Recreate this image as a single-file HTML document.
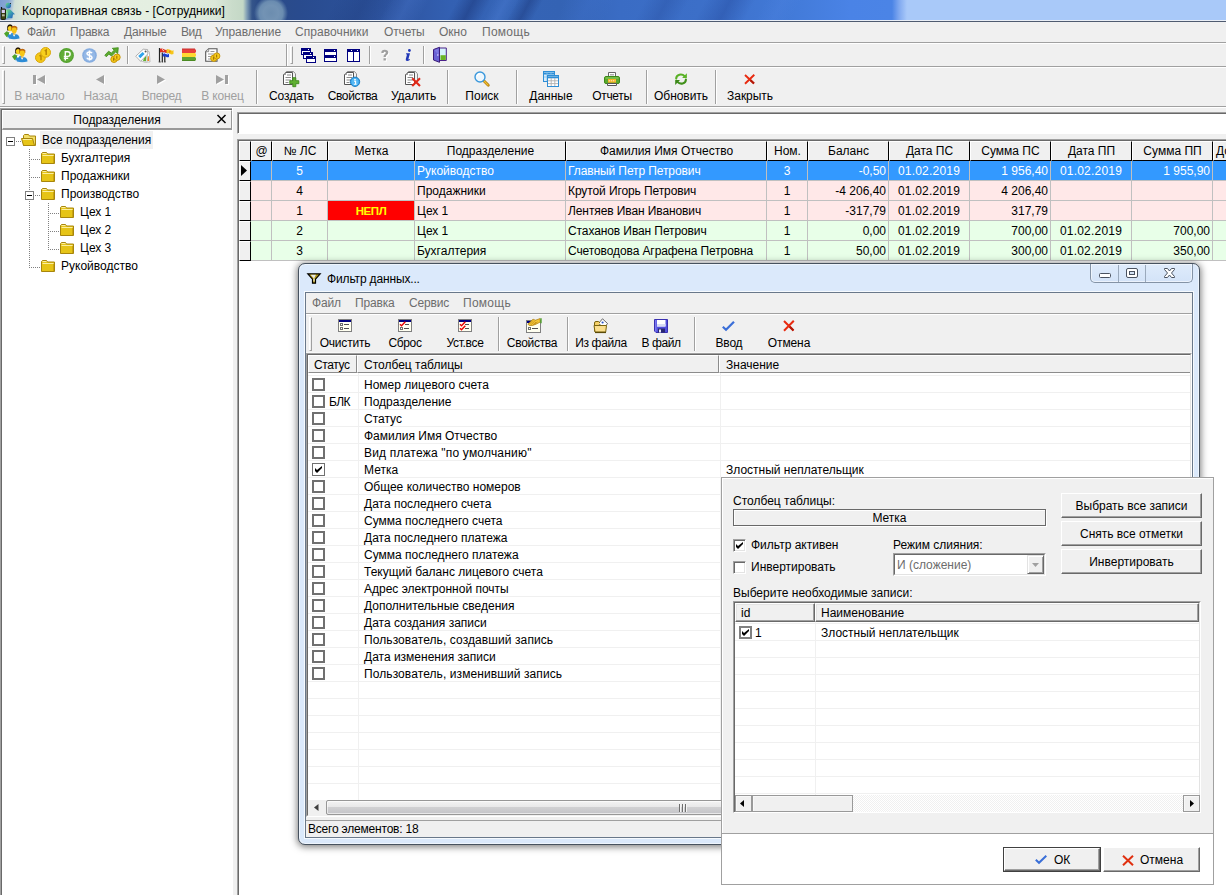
<!DOCTYPE html>
<html lang="ru">
<head>
<meta charset="utf-8">
<title>Корпоративная связь - [Сотрудники]</title>
<style>
*{box-sizing:border-box;margin:0;padding:0}
html,body{width:1226px;height:895px;overflow:hidden;background:#fff}
body{font-family:"Liberation Sans",sans-serif;font-size:12px;color:#000;position:relative}
.a{position:absolute}
.t{position:absolute;white-space:pre;line-height:14px;height:14px}
.g{color:#6d6d6d}
.hl{position:absolute;height:1px;left:0;right:0}
svg{position:absolute;overflow:visible}
#title{left:0;top:0;width:1226px;height:20px;background:
 radial-gradient(circle 17px at 271px 13px,#6c8daf 0,#7393b4 45%,#6a8cb0 70%,rgba(90,125,165,0) 100%),
 linear-gradient(100deg,#7d9dd0 0,#8aa8d6 9px,rgba(150,180,215,0) 15px),
 linear-gradient(90deg,#a6bce0 0,#cfdfd6 14px,#dde9d9 24px,#e6f0e3 60px,#e4efe1 150px,#dbe8d9 215px,#cadccb 232px,#c4d8c6 243px,#7f9cb4 247px,#35558a 252px,#2b4b86 258px,#294b8e 300px,#2b5098 350px,#2e55a2 400px,#3360b2 450px,#3564b6 500px,#3463b4 560px,#3a6cc4 620px,#3c6fc8 700px,#427ad8 790px,#4a83e6 850px,#4b84e6 892px,#7fa8f0 899px,#a9c9f9 907px,#a9c9f9 1226px)}
.grip{position:absolute;width:3px;border-top:1px solid #fff;border-left:1px solid #fff;border-right:1px solid #a0a0a0;border-bottom:1px solid #a0a0a0}
.vsep{position:absolute;width:2px;border-left:1px solid #a0a0a0;border-right:1px solid #fff}
.bl{position:absolute;width:80px;text-align:center;white-space:pre;line-height:14px;height:14px}
.dis{color:#a0a0a0}
.tr{position:absolute;white-space:pre;line-height:18px;height:18px}
.dv{position:absolute;width:1px;background:repeating-linear-gradient(180deg,#808080 0,#808080 1px,transparent 1px,transparent 2px)}
.dh{position:absolute;height:1px;background:repeating-linear-gradient(90deg,#808080 0,#808080 1px,transparent 1px,transparent 2px)}
.pm{position:absolute;width:9px;height:9px;border:1px solid #808080;background:#fff}
.pm:after{content:"";position:absolute;left:1px;top:3px;width:5px;height:1px;background:#000}
.hc{position:absolute;top:141px;height:20px;background:#f0f0f0;border-top:1px solid #fff;border-left:1px solid #fff;border-right:1px solid #000;border-bottom:1px solid #000;text-align:center;line-height:18px;white-space:pre;overflow:hidden}
.ic{position:absolute;left:239px;width:12px;height:20px;background:#f0f0f0;border-top:1px solid #fff;border-left:1px solid #fff;border-right:1px solid #000;border-bottom:1px solid #000}
.row{position:absolute;left:251px;width:975px;height:20px;border-bottom:1px solid #c0c0c0}
.c{position:absolute;top:0;height:19px;line-height:21px;white-space:pre;border-right:1px solid #c0c0c0;overflow:hidden}
.c.l{padding-left:2px;text-align:left}
.c.r{padding-right:2px;text-align:right}
.c.m{text-align:center}
.sel{background:#3399ff;color:#fff}
.pk{background:#ffe8e8}
.gr{background:#e8ffe8}
.lh{position:absolute;top:355px;height:18px;background:#f0f0f0;border-top:1px solid #fff;border-left:1px solid #fff;border-right:1px solid #8c8c8c;border-bottom:1px solid #8c8c8c;padding-left:5px;line-height:19px;white-space:pre;overflow:hidden}
.ch{position:absolute;top:603px;height:19px;background:#f0f0f0;border-top:1px solid #fff;border-left:1px solid #fff;border-right:1px solid #696969;border-bottom:1px solid #696969;box-shadow:inset -1px -1px 0 #a0a0a0,inset 1px 1px 0 #e3e3e3;padding-left:5px;line-height:19px;white-space:pre;overflow:hidden}
.cb{position:absolute;width:13px;height:13px;border:2px solid #707070;background:#fff}
.cb.ck{border:1px solid #707070}
.cc{position:absolute;width:13px;height:13px;background:#fff;border-top:1px solid #a0a0a0;border-left:1px solid #a0a0a0;border-right:1px solid #fff;border-bottom:1px solid #fff;box-shadow:inset 1px 1px 0 #696969,inset -1px -1px 0 #e3e3e3}
.cf{position:absolute;width:13px;height:13px;background:#fff;border:2px solid #808080}
.btn{position:absolute;background:#f0f0f0;border-top:1px solid #fff;border-left:1px solid #fff;border-right:1px solid #696969;border-bottom:1px solid #696969;box-shadow:inset -1px -1px 0 #a0a0a0;text-align:center;white-space:pre}
.sbb{position:absolute;background:#f0f0f0;border:1px solid #999;box-shadow:inset 1px 1px 0 #f8f8f8}
.dith{background:conic-gradient(#fff 25%,#f0f0f0 0 50%,#fff 0 75%,#f0f0f0 0) 0 0/2px 2px}
</style>
</head>
<body>
<!-- ===== main title bar ===== -->
<div id="title" class="a" style="overflow:hidden"><div class="a" style="left:330px;top:-4px;width:60px;height:28px;transform:skewX(-28deg);background:linear-gradient(90deg,rgba(20,40,95,0),rgba(20,40,95,0.18) 50%,rgba(20,40,95,0))"></div><div class="a" style="left:452px;top:-4px;width:34px;height:28px;transform:skewX(-28deg);background:linear-gradient(90deg,rgba(18,38,100,0),rgba(18,38,100,0.38) 50%,rgba(18,38,100,0))"></div><div class="a" style="left:512px;top:-4px;width:26px;height:28px;transform:skewX(-28deg);background:linear-gradient(90deg,rgba(18,38,100,0),rgba(18,38,100,0.34) 50%,rgba(18,38,100,0))"></div><div class="a" style="left:384px;top:-4px;width:40px;height:28px;transform:skewX(-28deg);background:linear-gradient(90deg,rgba(90,140,230,0),rgba(90,140,230,0.22) 50%,rgba(90,140,230,0))"></div><div class="a" style="left:488px;top:-4px;width:26px;height:28px;transform:skewX(-28deg);background:linear-gradient(90deg,rgba(90,140,230,0),rgba(90,140,230,0.25) 50%,rgba(90,140,230,0))"></div><div class="a" style="left:560px;top:-4px;width:50px;height:28px;transform:skewX(-28deg);background:linear-gradient(90deg,rgba(70,120,215,0),rgba(70,120,215,0.18) 50%,rgba(70,120,215,0))"></div><div class="a" style="left:640px;top:-4px;width:44px;height:28px;transform:skewX(-28deg);background:linear-gradient(90deg,rgba(25,55,130,0),rgba(25,55,130,0.22) 50%,rgba(25,55,130,0))"></div><div class="a" style="left:700px;top:-4px;width:50px;height:28px;transform:skewX(-28deg);background:linear-gradient(90deg,rgba(25,55,135,0),rgba(25,55,135,0.3) 50%,rgba(25,55,135,0))"></div><div class="a" style="left:760px;top:-4px;width:36px;height:28px;transform:skewX(-28deg);background:linear-gradient(90deg,rgba(90,140,235,0),rgba(90,140,235,0.15) 50%,rgba(90,140,235,0))"></div></div>
<div class="hl" style="top:20px;background:#e9eef6"></div>
<div class="hl" style="top:21px;background:#4f5b70"></div>
<div class="t" style="left:22px;top:4px;letter-spacing:.05px">Корпоративная связь - [Сотрудники]</div>
<svg style="left:0px;top:2px" width="17" height="18" viewBox="0 0 17 18"><defs><linearGradient id="ag" x1="0" y1="0" x2="1" y2="1"><stop offset="0" stop-color="#7be070"/><stop offset=".45" stop-color="#3aa0b0"/><stop offset="1" stop-color="#1c4fc0"/></linearGradient></defs><path d="M1.500 5v2.500" stroke="#111" stroke-width="1.200"/><rect x="1" y="7" width="4.500" height="10.500" rx=".8" fill="#3c4212" stroke="#161606" stroke-width=".9"/><rect x="1.700" y="7.800" width="3.200" height="3.200" fill="#d6ccf2"/><rect x="2" y="12.300" width="2.700" height="2" fill="#b8b8a0"/><circle cx="8.300" cy="3.500" r="2.700" fill="url(#ag)"/><path d="M10.200 1.300 11 1.800" stroke="#111" stroke-width="1"/><path d="M6.200 8Q8.500 6.300 10.800 8L13.200 10.500 15 12.200 13 12.600 12.300 16.200H6.200z" fill="url(#ag)"/><path d="M6.600 8.500Q7.800 12 6.600 16" stroke="#9fe89a" stroke-width="1" fill="none"/></svg>
<!-- ===== menu bar ===== -->
<div class="a" style="left:0;top:22px;width:1226px;height:86px;background:#f0f0f0"></div>
<div class="t g" style="left:27px;top:25px;letter-spacing:-0.3px">Файл</div>
<div class="t g" style="left:70px;top:25px;letter-spacing:-0.2px">Правка</div>
<div class="t g" style="left:124px;top:25px;letter-spacing:-0.15px">Данные</div>
<div class="t g" style="left:181px;top:25px;letter-spacing:-0.5px">Вид</div>
<div class="t g" style="left:215px;top:25px;letter-spacing:-0.07px">Управление</div>
<div class="t g" style="left:295px;top:25px;letter-spacing:0.07px">Справочники</div>
<div class="t g" style="left:384px;top:25px;letter-spacing:-0.15px">Отчеты</div>
<div class="t g" style="left:439px;top:25px;letter-spacing:0px">Окно</div>
<div class="t g" style="left:482px;top:25px;letter-spacing:0.27px">Помощь</div>
<div class="hl" style="top:42px;background:#a0a0a0"></div>
<div class="hl" style="top:43px;background:#fff"></div>
<!-- ===== icon toolbar ===== -->
<div class="grip" style="left:2px;top:46px;height:18px"></div>
<div class="vsep" style="left:127px;top:46px;height:18px"></div>
<div class="vsep" style="left:286px;top:44px;height:22px"></div>
<div class="grip" style="left:290px;top:46px;height:18px"></div>
<div class="vsep" style="left:369px;top:46px;height:18px"></div>
<div class="vsep" style="left:423px;top:46px;height:18px"></div>
<div class="hl" style="top:66px;background:#a0a0a0"></div>
<div class="hl" style="top:67px;background:#fff"></div>
<svg style="left:4px;top:24px" width="16" height="16" viewBox="0 0 16 16"><path d="M0 9.5 3 7l1 1.2 1.5-.2v4L2.5 13z" fill="#4ea32a"/><path d="M3.5 13.5c0-3 1.5-4.5 4-4.5s4 1.500 4 4.500z" fill="#2f8fd8"/><path d="M3.200 6.500V2.800Q3.500.3 6 .3T8.800 2.800V6.500z" fill="#2a1a08"/><ellipse cx="6" cy="4.6" rx="2.100" ry="2.700" fill="#f7cf1d"/><path d="M5 8.500h2.200v2H5z" fill="#fff"/><path d="M4.800 14.600c0-3.200 1.800-4.600 5.200-4.600s5.500 1.400 5.500 4.600Q10 16 4.800 14.600z" fill="#2d8cd6"/><path d="M8.600 10.200h3l-1.500 2.600z" fill="#fff"/><path d="M7.200 6V3.600Q7.600 1.700 10.200 1.700T13.300 3.600V6z" fill="#b8620e"/><ellipse cx="10.200" cy="6.200" rx="2.600" ry="3.100" fill="#f6c619"/><path d="M7.600 4.600Q10.200 2.600 12.900 4.600L12.900 3.500Q10.200 1.500 7.600 3.500z" fill="#c9720f"/><path d="M9 9.200q1.200.8 2.400 0v1.300H9z" fill="#e0a010"/></svg>
<svg style="left:12px;top:47px" width="16" height="16" viewBox="0 0 16 16"><path d="M0 9.5 3 7l1 1.2 1.5-.2v4L2.5 13z" fill="#4ea32a"/><path d="M3.5 13.5c0-3 1.5-4.5 4-4.5s4 1.500 4 4.500z" fill="#2f8fd8"/><path d="M3.200 6.500V2.800Q3.500.3 6 .3T8.800 2.800V6.500z" fill="#2a1a08"/><ellipse cx="6" cy="4.6" rx="2.100" ry="2.700" fill="#f7cf1d"/><path d="M5 8.500h2.200v2H5z" fill="#fff"/><path d="M4.800 14.600c0-3.200 1.800-4.600 5.200-4.600s5.500 1.400 5.500 4.600Q10 16 4.800 14.600z" fill="#2d8cd6"/><path d="M8.600 10.200h3l-1.500 2.600z" fill="#fff"/><path d="M7.200 6V3.600Q7.600 1.700 10.200 1.700T13.300 3.600V6z" fill="#b8620e"/><ellipse cx="10.200" cy="6.200" rx="2.600" ry="3.100" fill="#f6c619"/><path d="M7.600 4.600Q10.200 2.600 12.900 4.600L12.900 3.500Q10.200 1.500 7.600 3.500z" fill="#c9720f"/><path d="M9 9.200q1.200.8 2.400 0v1.300H9z" fill="#e0a010"/></svg>
<svg style="left:35px;top:47px" width="16" height="16" viewBox="0 0 16 16"><circle cx="5.400" cy="10.600" r="4.900" fill="#f4c816" stroke="#d9a60a"/><path d="M4.500 9.200 6 8.200v5" stroke="#b88606" stroke-width="1.500" fill="none"/><circle cx="10.600" cy="5.400" r="4.900" fill="#f7cf1c" stroke="#d9a60a"/><path d="M9.700 4 11.200 3v5" stroke="#b88606" stroke-width="1.500" fill="none"/></svg>
<svg style="left:59px;top:48px" width="15" height="15" viewBox="0 0 15 15"><circle cx="7.500" cy="7.500" r="7.400" fill="#54a230"/><circle cx="7.500" cy="7.500" r="6.200" fill="#62ad38"/><path d="M6.300 12.500V3.700h2.500a2.300 2.300 0 0 1 0 4.700H4.800M4.800 10.300h4.400" stroke="#fff" stroke-width="1.400" fill="none"/></svg>
<svg style="left:81.5px;top:47.5px" width="15" height="15" viewBox="0 0 15 15"><circle cx="7.500" cy="7.500" r="7.300" fill="#86ade0"/><circle cx="7.500" cy="7.500" r="5.800" fill="#94b8e6"/><path d="M10 5.200Q9.300 3.900 7.500 3.900C5.600 3.900 5 4.900 5 5.700c0 2.500 5 1.200 5 3.700 0 .9-.8 1.800-2.500 1.800Q5.500 11.200 4.900 9.800M7.500 2.500v10" stroke="#fff" stroke-width="1.500" fill="none"/></svg>
<svg style="left:104px;top:47px" width="17" height="16" viewBox="0 0 17 16"><path d="M.8 8.200 4.600 4.200 7.300 6 10.200 3.200 8.300 1.300 14.300.7 13.700 6.700 11.800 4.800 7.600 9 4.900 7.200 2.300 9.800z" fill="#5cab2e" stroke="#3f8a1c" stroke-width=".8"/><circle cx="10" cy="12.300" r="3.200" fill="#f6cc1a" stroke="#c9960a"/><circle cx="13" cy="10.200" r="3.200" fill="#f6cc1a" stroke="#c9960a"/><path d="M9.600 10.800v3M12.800 8.700v3" stroke="#a87806" stroke-width="1.200"/></svg>
<svg style="left:135px;top:48px" width="16" height="15" viewBox="0 0 16 15"><path d="M9.500 2.300 14.300 3.800 15 14H8.500z" fill="#fff" stroke="#b0b0b0" stroke-width=".8"/><path d="M12.500 8.500 13.800 8 14.200 13h-2.600z" fill="#f5831e"/><path d="M7.500 1.800 12.700 2.500 12 14.200 5.500 13z" fill="#fff" stroke="#b8b8b8" stroke-width=".8"/><path d="M9.800 8.800 11.500 7.500 11 13.200 7.800 12.800z" fill="#62b032"/><path d="M.7 8.200 8.300 1.200 12.600 1.500 12.800 5.900 5.600 13.300z" fill="#fff" stroke="#a8a8a8" stroke-width=".9"/><path d="M3.200 8.100 7.600 4 9.600 6.100 5.300 10.300z" fill="#2ea3ea"/><circle cx="10.600" cy="3.500" r="1" fill="#555"/></svg>
<svg style="left:158px;top:47px" width="16" height="16" viewBox="0 0 16 16"><path d="M1.500 1v14M4.300 5.500V15M6.800 7.500V15" stroke="#222" stroke-width="1.200"/><path d="M.7 15h2M3.700 15h1.400M6.200 15h1.400" stroke="#444"/><path d="M2 1.800Q4 .8 6 2.200T10 2.500V6Q8 6.800 6 5.600T2 5.600z" fill="#e03020"/><path d="M4.200 2.300q1 .5 1.500 1.800" stroke="#fff" stroke-width=".8" fill="none"/><path d="M8.500 2.600Q10.500 1.500 12.500 3T15.500 3V7Q13.500 8 12 6.800T8.500 6.800z" fill="#f6c61a"/><path d="M11 3.200 13 4.800 11 6.300z" fill="#f08a10"/><path d="M4.800 5.800Q6.500 5 8 6T11 6V10Q9.500 10.800 8 9.800T4.800 9.800z" fill="#1c3fd0"/><path d="M5 6.300Q6.500 5.500 8 6.500T10.800 6.500" stroke="#fff" stroke-width="1" fill="none"/></svg>
<svg style="left:182px;top:49px" width="14" height="12" viewBox="0 0 14 12"><path d="M0 0h13l1 1v2l-1 1H0z" fill="#e8403c"/><path d="M0 0h13" stroke="#c83030"/><path d="M0 4h13l1 1v2l-1 1H0z" fill="#ffd832"/><path d="M0 8h13l1 1v2l-1 1H0z" fill="#5fa232"/><path d="M0 11.500h13" stroke="#4a8a22"/></svg>
<svg style="left:205px;top:48px" width="16" height="15" viewBox="0 0 16 15"><path d="M.7 3.700 3.700.7H12V13.300H.7z" fill="#fff" stroke="#555" stroke-width="1.100"/><path d="M.7 3.700h3V.7" fill="#ddd" stroke="#777" stroke-width=".8"/><path d="M5.500 3.500h4M3 6h6M3 8.500h4M3 11h3" stroke="#999" stroke-width="1"/><circle cx="8.800" cy="10.200" r="3.100" fill="#f6cc1a" stroke="#c9960a"/><circle cx="11.800" cy="8" r="3.100" fill="#f6cc1a" stroke="#c9960a"/><path d="M8.500 8.800v3M11.600 6.500v3" stroke="#a87806" stroke-width="1.200"/></svg>
<svg style="left:301px;top:48px" width="15" height="15" viewBox="0 0 15 15" shape-rendering="crispEdges"><rect x="0" y="0" width="10" height="7" fill="#000080"/><rect x="1" y="3" width="8" height="3" fill="#fff"/><rect x="7" y="1" width="1" height="1" fill="#fff"/><rect x="2" y="4" width="10" height="7" fill="#000080"/><rect x="3" y="7" width="8" height="3" fill="#fff"/><rect x="9" y="5" width="1" height="1" fill="#fff"/><rect x="5" y="8" width="10" height="7" fill="#000080"/><rect x="6" y="11" width="8" height="3" fill="#fff"/><rect x="12" y="9" width="1" height="1" fill="#fff"/></svg>
<svg style="left:324px;top:49px" width="13" height="13" viewBox="0 0 13 13" shape-rendering="crispEdges"><rect x="0" y="0" width="13" height="7" fill="#000080"/><rect x="1" y="3" width="11" height="3" fill="#fff"/><rect x="10" y="1" width="1" height="1" fill="#fff"/><rect x="0" y="6" width="13" height="7" fill="#000080"/><rect x="1" y="9" width="11" height="3" fill="#fff"/><rect x="10" y="7" width="1" height="1" fill="#fff"/></svg>
<svg style="left:347px;top:49px" width="13" height="13" viewBox="0 0 13 13" shape-rendering="crispEdges"><rect x="0" y="0" width="7" height="13" fill="#000080"/><rect x="1" y="3" width="5" height="9" fill="#fff"/><rect x="4" y="1" width="1" height="1" fill="#fff"/><rect x="6" y="0" width="7" height="13" fill="#000080"/><rect x="7" y="3" width="5" height="9" fill="#fff"/><rect x="10" y="1" width="1" height="1" fill="#fff"/></svg>
<svg style="left:380px;top:48.5px" width="11" height="13" viewBox="0 0 11 13"><path d="M1.300 4Q1.300 .8 4.700 .8T8.300 3.500Q8.300 5.300 6.500 6.300 5.800 6.800 5.800 8H3.500Q3.400 6.200 4.800 5.200 5.800 4.500 5.800 3.700 5.800 2.800 4.700 2.800T3.600 4zM3.500 9.200h2.400v2.400H3.500z" fill="#fff" transform="translate(1,1)"/><path d="M1.300 4Q1.300 .8 4.700 .8T8.300 3.500Q8.300 5.300 6.500 6.300 5.800 6.800 5.800 8H3.500Q3.400 6.200 4.800 5.200 5.800 4.500 5.800 3.700 5.800 2.800 4.700 2.800T3.600 4zM3.500 9.200h2.400v2.400H3.500z" fill="#a0a0a0"/></svg>
<svg style="left:404.5px;top:48.8px" width="7" height="12" viewBox="0 0 7 12"><circle cx="4.400" cy="1.500" r="1.400" fill="#2238b8"/><path d="M1.200 4.300H5L3.500 9.800Q3.300 10.600 4.300 10.300L5 10 4.800 10.900Q3.300 12 1.800 11.900.3 11.700.8 10L2 5.500 1 5.300z" fill="#2238b8"/></svg>
<svg style="left:432.5px;top:47px" width="14" height="16" viewBox="0 0 14 16"><path d="M6.500 1h6.800v12.500H6.500z" fill="#d4f2fc" stroke="#4a2088" stroke-width="1"/><path d="M7.500 8.200h5.300V13H7.500z" fill="#6ab424"/><path d="M.5 2.500 6.500.3V15.300L.5 13z" fill="#6a62d4" stroke="#3a1a78" stroke-width="1"/><path d="M1.500 3.200 5.500 1.700V8z" fill="#7f78e0"/><circle cx="4.800" cy="8" r=".8" fill="#e8d8ff"/></svg>
<!-- ===== big toolbar ===== -->
<div class="grip" style="left:2px;top:70px;height:34px"></div>
<div class="vsep" style="left:256px;top:70px;height:34px"></div>
<div class="vsep" style="left:447px;top:70px;height:34px"></div>
<div class="vsep" style="left:516px;top:70px;height:34px"></div>
<div class="vsep" style="left:646px;top:70px;height:34px"></div>
<div class="vsep" style="left:715px;top:70px;height:34px"></div>
<div class="bl dis" style="left:-0.5px;top:89px;letter-spacing:-0.1px">В начало</div>
<div class="bl dis" style="left:60.5px;top:89px;letter-spacing:-0.1px">Назад</div>
<div class="bl dis" style="left:121.5px;top:89px;letter-spacing:-0.3px">Вперед</div>
<div class="bl dis" style="left:182.5px;top:89px;letter-spacing:-0.15px">В конец</div>
<div class="bl" style="left:251.5px;top:89px;letter-spacing:-0.1px">Создать</div>
<div class="bl" style="left:312.5px;top:89px;letter-spacing:-0.4px">Свойства</div>
<div class="bl" style="left:373.5px;top:89px;letter-spacing:-0.1px">Удалить</div>
<div class="bl" style="left:442px;top:89px;letter-spacing:0px">Поиск</div>
<div class="bl" style="left:511px;top:89px;letter-spacing:0px">Данные</div>
<div class="bl" style="left:572px;top:89px;letter-spacing:-0.3px">Отчеты</div>
<div class="bl" style="left:641px;top:89px;letter-spacing:-0.05px">Обновить</div>
<div class="bl" style="left:710px;top:89px;letter-spacing:-0.05px">Закрыть</div>
<div class="hl" style="top:106px;background:#a0a0a0"></div>
<div class="hl" style="top:107px;background:#fff"></div>
<svg style="left:33px;top:75px" width="14" height="11" viewBox="0 0 14 11"><g transform="translate(1,1)"><path d="M0 0h3v9H0zM12 0v9L4 4.500z" fill="#fff"/></g><g transform="translate(0,0)"><path d="M0 0h3v9H0zM12 0v9L4 4.500z" fill="#a0a0a0"/></g></svg>
<svg style="left:96px;top:75px" width="14" height="11" viewBox="0 0 14 11"><g transform="translate(1,1)"><path d="M8 0v9L0 4.500z" fill="#fff"/></g><g transform="translate(0,0)"><path d="M8 0v9L0 4.500z" fill="#a0a0a0"/></g></svg>
<svg style="left:157px;top:75px" width="14" height="11" viewBox="0 0 14 11"><g transform="translate(1,1)"><path d="M0 0v9L8 4.500z" fill="#fff"/></g><g transform="translate(0,0)"><path d="M0 0v9L8 4.500z" fill="#a0a0a0"/></g></svg>
<svg style="left:216px;top:75px" width="14" height="11" viewBox="0 0 14 11"><g transform="translate(1,1)"><path d="M0 0v9L8 4.500zM9 0h3v9H9z" fill="#fff"/></g><g transform="translate(0,0)"><path d="M0 0v9L8 4.500zM9 0h3v9H9z" fill="#a0a0a0"/></g></svg>
<svg style="left:283px;top:71px" width="16" height="16" viewBox="0 0 16 16"><path d="M3.500 2.500V.500h6.800l2.200 2.200V10" fill="#f4f4f4" stroke="#8a8a8a"/><path d="M.500 3.500 2.500 1.500H9.500V13.500H.500z" fill="#fff" stroke="#555"/><path d="M.500 3.500h2v-2" fill="#e0e0e0" stroke="#777" stroke-width=".8"/><path d="M4 4h4M2.500 6.500h5.500M2.500 9h5.500M2.500 11.500h3" stroke="#8a8a8a"/><path d="M9.500 7.500h3v3h3v3h-3v3h-3v-3h-3v-3h3z" fill="#5fb031" stroke="#3e8a1c" stroke-width=".9" transform="translate(.3,-.8)"/></svg>
<svg style="left:344px;top:71px" width="16" height="16" viewBox="0 0 16 16"><path d="M3.500 2.500V.500h6.800l2.200 2.200V10" fill="#f4f4f4" stroke="#8a8a8a"/><path d="M.500 3.500 2.500 1.500H9.500V13.500H.500z" fill="#fff" stroke="#555"/><path d="M.500 3.500h2v-2" fill="#e0e0e0" stroke="#777" stroke-width=".8"/><path d="M4 4h4M2.500 6.500h5.500M2.500 9h5.500M2.500 11.500h3" stroke="#8a8a8a"/><circle cx="11" cy="10.800" r="4.700" fill="#2ea0e8" stroke="#1878c0" stroke-width=".9"/><circle cx="11" cy="10.800" r="3.600" fill="#56b8f4"/><circle cx="11" cy="8.600" r=".9" fill="#fff"/><path d="M10 10.200h1.600v3M9.800 13.300h2.800" stroke="#fff" stroke-width="1.100" fill="none"/></svg>
<svg style="left:405px;top:71px" width="16" height="16" viewBox="0 0 16 16"><path d="M3.500 2.500V.500h6.800l2.200 2.200V10" fill="#f4f4f4" stroke="#8a8a8a"/><path d="M.500 3.500 2.500 1.500H9.500V13.500H.500z" fill="#fff" stroke="#555"/><path d="M.500 3.500h2v-2" fill="#e0e0e0" stroke="#777" stroke-width=".8"/><path d="M4 4h4M2.500 6.500h5.500M2.500 9h5.500M2.500 11.500h3" stroke="#8a8a8a"/><path d="M7.200 7.200 15 15M15 7.200 7.200 15" stroke="#e02818" stroke-width="2.100" fill="none"/></svg>
<svg style="left:474px;top:71px" width="16" height="16" viewBox="0 0 16 16"><path d="M9.800 9.800 14.300 14.300" stroke="#b07808" stroke-width="2.800" stroke-linecap="round"/><path d="M9.800 9.800 14 14" stroke="#f0c030" stroke-width="1.300" stroke-linecap="round"/><circle cx="6" cy="6" r="5" fill="#eef7fd" stroke="#3a98dc" stroke-width="1.400"/><path d="M3 5.500A3.200 3.200 0 0 1 6 2.800" stroke="#fff" stroke-width="1.200" fill="none"/></svg>
<svg style="left:543px;top:71px" width="16" height="16" viewBox="0 0 16 16"><rect x=".500" y=".500" width="11" height="10" fill="#d8ecfa" stroke="#2e8ed6"/><path d="M.500 2.500h11" stroke="#2e8ed6" stroke-width="2"/><path d="M4 1v9M8 1v9M1 6h10" stroke="#7fc0ee" stroke-width=".8"/><rect x="4.500" y="4.500" width="11" height="11" fill="#fff" stroke="#2e8ed6"/><path d="M4.500 6.300h11" stroke="#2e8ed6" stroke-width="2"/><path d="M8.200 7v8M11.800 7v8M5 9.800h10M5 12.600h10" stroke="#b0b0b0" stroke-width=".9"/></svg>
<svg style="left:604px;top:72px" width="16" height="14" viewBox="0 0 16 14"><path d="M4.500 5V.500h7V5" fill="#fff" stroke="#666"/><path d="M6 2.500h4M6 4h4" stroke="#999" stroke-width=".8"/><rect x=".500" y="4.500" width="15" height="7" rx="1.500" fill="#5aa82e" stroke="#3c8a18"/><path d="M1.500 6h13" stroke="#8fd060" stroke-width="1"/><rect x="4" y="7" width="8" height="3.600" fill="#f7b020"/><path d="M4.800 8.800h6.500" stroke="#fff" stroke-width="1" stroke-dasharray="1 1"/><path d="M3.500 11.500h9v2h-9z" fill="#fff" stroke="#555"/></svg>
<svg style="left:675px;top:73px" width="12" height="12" viewBox="0 0 12 12"><path d="M1.200 5.600C1.200 1.200 7 .300 9.600 3.200" stroke="#58b024" stroke-width="2.100" fill="none" stroke-linecap="round"/><path d="M11.900 .300V5.100H7.100z" fill="#5cb428"/><path d="M10.900 6.500C10.900 10.900 5.100 11.800 2.500 8.900" stroke="#40901a" stroke-width="2.100" fill="none" stroke-linecap="round"/><path d="M.200 11.900V7.100H5z" fill="#3c8818"/></svg>
<svg style="left:744px;top:74px" width="11" height="10" viewBox="0 0 11 10"><path d="M1 1 10 9.500M10.300.700 1 9.700" stroke="#e82a10" stroke-width="1.900" fill="none"/><path d="M6.500 6.200 10 9.500" stroke="#b01808" stroke-width="1.900"/></svg>
<!-- ===== left panel ===== -->
<div class="a" style="left:0;top:108px;width:237px;height:787px;background:#f0f0f0"></div>
<div class="a" style="left:0;top:108px;width:232px;height:787px;border-top:1px solid #a0a0a0;border-left:1px solid #a0a0a0"></div>
<div class="a" style="left:1px;top:109px;width:231px;height:786px;background:#fff;border-top:1px solid #696969;border-left:1px solid #696969"></div>
<div class="a" style="left:232px;top:108px;width:1px;height:787px;background:#fff"></div>
<div class="a" style="left:2px;top:110px;width:230px;height:20px;background:#f0f0f0;border-top:1px solid #fff;border-left:1px solid #fff;border-right:1px solid #999;border-bottom:2px solid #999"></div>
<div class="t" style="left:30px;width:174px;text-align:center;top:113px">Подразделения</div>
<svg style="left:217px;top:115px" width="9" height="8" viewBox="0 0 9 8"><path d="M.5 0 8.500 8M8.500 0 .5 8" stroke="#000" stroke-width="1.500" fill="none"/></svg>
<div class="a" style="left:40px;top:131px;width:113px;height:18px;background:#f0f0f0"></div>
<div class="dv" style="left:29px;top:149px;height:119px"></div>
<div class="dv" style="left:48px;top:203px;height:47px"></div>
<div class="dh" style="left:16px;top:141px;width:5px"></div>
<div class="pm" style="left:6px;top:137px"></div>
<svg style="left:21px;top:134px" width="16" height="12" viewBox="0 0 16 12"><path d="M2.500 11.500V1.500l1-1h4l1 1.500h6v9.500z" fill="#f3df6a" stroke="#a8860c"/><path d="M.500 4.500h11l2 7H2.500z" fill="#e6c417" stroke="#a8860c"/><path d="M1.800 5.500h9" stroke="#fbeea0" fill="none"/></svg>
<div class="tr" style="left:42px;top:131px">Все подразделения</div>
<div class="dh" style="left:31px;top:159px;width:10px"></div>
<svg style="left:41px;top:152px" width="14" height="12" viewBox="0 0 14 12"><path d="M.5 11.5V1.5l1-1h4l1 1.5h7v9.5z" fill="#e6c417" stroke="#a8860c"/><path d="M1.5 1.5h4M1.5 3.500h11" stroke="#fbeea0" fill="none"/><path d="M12.500 4v7" stroke="#c9a40f" fill="none"/></svg>
<div class="tr" style="left:61px;top:149px">Бухгалтерия</div>
<div class="dh" style="left:31px;top:177px;width:10px"></div>
<svg style="left:41px;top:170px" width="14" height="12" viewBox="0 0 14 12"><path d="M.5 11.5V1.5l1-1h4l1 1.5h7v9.5z" fill="#e6c417" stroke="#a8860c"/><path d="M1.5 1.5h4M1.5 3.500h11" stroke="#fbeea0" fill="none"/><path d="M12.500 4v7" stroke="#c9a40f" fill="none"/></svg>
<div class="tr" style="left:61px;top:167px">Продажники</div>
<div class="dh" style="left:31px;top:195px;width:10px"></div>
<div class="pm" style="left:25px;top:191px"></div>
<svg style="left:41px;top:188px" width="14" height="12" viewBox="0 0 14 12"><path d="M.5 11.5V1.5l1-1h4l1 1.5h7v9.5z" fill="#e6c417" stroke="#a8860c"/><path d="M1.5 1.5h4M1.5 3.500h11" stroke="#fbeea0" fill="none"/><path d="M12.500 4v7" stroke="#c9a40f" fill="none"/></svg>
<div class="tr" style="left:61px;top:185px">Производство</div>
<div class="dh" style="left:50px;top:213px;width:10px"></div>
<svg style="left:60px;top:206px" width="14" height="12" viewBox="0 0 14 12"><path d="M.5 11.5V1.5l1-1h4l1 1.5h7v9.5z" fill="#e6c417" stroke="#a8860c"/><path d="M1.5 1.5h4M1.5 3.500h11" stroke="#fbeea0" fill="none"/><path d="M12.500 4v7" stroke="#c9a40f" fill="none"/></svg>
<div class="tr" style="left:80px;top:203px">Цех 1</div>
<div class="dh" style="left:50px;top:231px;width:10px"></div>
<svg style="left:60px;top:224px" width="14" height="12" viewBox="0 0 14 12"><path d="M.5 11.5V1.5l1-1h4l1 1.5h7v9.5z" fill="#e6c417" stroke="#a8860c"/><path d="M1.5 1.5h4M1.5 3.500h11" stroke="#fbeea0" fill="none"/><path d="M12.500 4v7" stroke="#c9a40f" fill="none"/></svg>
<div class="tr" style="left:80px;top:221px">Цех 2</div>
<div class="dh" style="left:50px;top:249px;width:10px"></div>
<svg style="left:60px;top:242px" width="14" height="12" viewBox="0 0 14 12"><path d="M.5 11.5V1.5l1-1h4l1 1.5h7v9.5z" fill="#e6c417" stroke="#a8860c"/><path d="M1.5 1.5h4M1.5 3.500h11" stroke="#fbeea0" fill="none"/><path d="M12.500 4v7" stroke="#c9a40f" fill="none"/></svg>
<div class="tr" style="left:80px;top:239px">Цех 3</div>
<div class="dh" style="left:31px;top:267px;width:10px"></div>
<svg style="left:41px;top:260px" width="14" height="12" viewBox="0 0 14 12"><path d="M.5 11.5V1.5l1-1h4l1 1.5h7v9.5z" fill="#e6c417" stroke="#a8860c"/><path d="M1.5 1.5h4M1.5 3.500h11" stroke="#fbeea0" fill="none"/><path d="M12.500 4v7" stroke="#c9a40f" fill="none"/></svg>
<div class="tr" style="left:61px;top:257px">Рукойводство</div>
<!-- ===== main right area ===== -->
<div class="a" style="left:237px;top:108px;width:989px;height:32px;background:#f0f0f0"></div>
<div class="a" style="left:237px;top:112px;width:1000px;height:22px;background:#fff;border-top:1px solid #a0a0a0;border-left:1px solid #a0a0a0;border-bottom:1px solid #fff"></div>
<div class="a" style="left:238px;top:113px;width:1000px;height:20px;border-top:1px solid #696969;border-left:1px solid #696969"></div>
<div class="a" style="left:237px;top:139px;width:1000px;height:760px;background:#fff;border-top:1px solid #a0a0a0;border-left:1px solid #a0a0a0"></div>
<div class="a" style="left:238px;top:140px;width:1000px;height:760px;border-top:1px solid #696969;border-left:1px solid #696969"></div>
<div class="hc" style="left:239px;width:12px"></div>
<div class="hc" style="left:251px;width:21px">@</div>
<div class="hc" style="left:272px;width:56px">№ ЛС</div>
<div class="hc" style="left:328px;width:87px">Метка</div>
<div class="hc" style="left:415px;width:151px">Подразделение</div>
<div class="hc" style="left:566px;width:201px">Фамилия Имя Отчество</div>
<div class="hc" style="left:767px;width:41px">Ном.</div>
<div class="hc" style="left:808px;width:81px">Баланс</div>
<div class="hc" style="left:889px;width:81px">Дата ПС</div>
<div class="hc" style="left:970px;width:81px">Сумма ПС</div>
<div class="hc" style="left:1051px;width:81px">Дата ПП</div>
<div class="hc" style="left:1132px;width:81px">Сумма ПП</div>
<div class="hc" style="left:1213px;width:88px;text-align:left;padding-left:2px">До</div>
<div class="ic" style="top:161px"></div>
<div class="row sel" style="top:161px">
<div class="c m" style="left:0px;width:21px"></div>
<div class="c m" style="left:21px;width:56px">5</div>
<div class="c m" style="left:77px;width:87px"></div>
<div class="c l" style="left:164px;width:151px">Рукойводство</div>
<div class="c l" style="left:315px;width:201px;letter-spacing:-.1px">Главный Петр Петрович</div>
<div class="c m" style="left:516px;width:41px">3</div>
<div class="c r" style="left:557px;width:81px">-0,50</div>
<div class="c m" style="left:638px;width:81px;letter-spacing:.2px">01.02.2019</div>
<div class="c r" style="left:719px;width:81px">1 956,40</div>
<div class="c m" style="left:800px;width:81px;letter-spacing:.2px">01.02.2019</div>
<div class="c r" style="left:881px;width:81px">1 955,90</div>
<div class="c l" style="left:962px;width:88px"></div>
</div>
<div class="ic" style="top:181px"></div>
<div class="row pk" style="top:181px">
<div class="c m" style="left:0px;width:21px"></div>
<div class="c m" style="left:21px;width:56px">4</div>
<div class="c m" style="left:77px;width:87px"></div>
<div class="c l" style="left:164px;width:151px">Продажники</div>
<div class="c l" style="left:315px;width:201px;letter-spacing:-.1px">Крутой Игорь Петрович</div>
<div class="c m" style="left:516px;width:41px">1</div>
<div class="c r" style="left:557px;width:81px">-4 206,40</div>
<div class="c m" style="left:638px;width:81px;letter-spacing:.2px">01.02.2019</div>
<div class="c r" style="left:719px;width:81px">4 206,40</div>
<div class="c m" style="left:800px;width:81px;letter-spacing:.2px"></div>
<div class="c r" style="left:881px;width:81px"></div>
<div class="c l" style="left:962px;width:88px"></div>
</div>
<div class="ic" style="top:201px"></div>
<div class="row pk" style="top:201px">
<div class="c m" style="left:0px;width:21px"></div>
<div class="c m" style="left:21px;width:56px">1</div>
<div class="c m" style="left:77px;width:87px;background:#ff0000;color:#ffff00;font-weight:bold;font-size:11.5px;letter-spacing:-.45px">НЕПЛ</div>
<div class="c l" style="left:164px;width:151px">Цех 1</div>
<div class="c l" style="left:315px;width:201px;letter-spacing:-.1px">Лентяев Иван Иванович</div>
<div class="c m" style="left:516px;width:41px">1</div>
<div class="c r" style="left:557px;width:81px">-317,79</div>
<div class="c m" style="left:638px;width:81px;letter-spacing:.2px">01.02.2019</div>
<div class="c r" style="left:719px;width:81px">317,79</div>
<div class="c m" style="left:800px;width:81px;letter-spacing:.2px"></div>
<div class="c r" style="left:881px;width:81px"></div>
<div class="c l" style="left:962px;width:88px"></div>
</div>
<div class="ic" style="top:221px"></div>
<div class="row gr" style="top:221px">
<div class="c m" style="left:0px;width:21px"></div>
<div class="c m" style="left:21px;width:56px">2</div>
<div class="c m" style="left:77px;width:87px"></div>
<div class="c l" style="left:164px;width:151px">Цех 1</div>
<div class="c l" style="left:315px;width:201px;letter-spacing:-.1px">Стаханов Иван Петрович</div>
<div class="c m" style="left:516px;width:41px">1</div>
<div class="c r" style="left:557px;width:81px">0,00</div>
<div class="c m" style="left:638px;width:81px;letter-spacing:.2px">01.02.2019</div>
<div class="c r" style="left:719px;width:81px">700,00</div>
<div class="c m" style="left:800px;width:81px;letter-spacing:.2px">01.02.2019</div>
<div class="c r" style="left:881px;width:81px">700,00</div>
<div class="c l" style="left:962px;width:88px"></div>
</div>
<div class="ic" style="top:241px"></div>
<div class="row gr" style="top:241px">
<div class="c m" style="left:0px;width:21px"></div>
<div class="c m" style="left:21px;width:56px">3</div>
<div class="c m" style="left:77px;width:87px"></div>
<div class="c l" style="left:164px;width:151px">Бухгалтерия</div>
<div class="c l" style="left:315px;width:201px;letter-spacing:-.1px">Счетоводова Аграфена Петровна</div>
<div class="c m" style="left:516px;width:41px">1</div>
<div class="c r" style="left:557px;width:81px">50,00</div>
<div class="c m" style="left:638px;width:81px;letter-spacing:.2px">01.02.2019</div>
<div class="c r" style="left:719px;width:81px">300,00</div>
<div class="c m" style="left:800px;width:81px;letter-spacing:.2px">01.02.2019</div>
<div class="c r" style="left:881px;width:81px">350,00</div>
<div class="c l" style="left:962px;width:88px"></div>
</div>
<svg style="left:241px;top:165px" width="6" height="11" viewBox="0 0 6 11"><path d="M0 0 6 5.500 0 11z" fill="#000"/></svg>
<!-- ===== filter dialog ===== -->
<div class="a" style="left:298px;top:263px;width:902px;height:582px;border:1px solid #47525f;border-radius:7px;background:#dbe9fb;box-shadow:0 1px 7px 1px rgba(0,0,0,.5),inset 0 0 0 1px #eef5fd"></div>
<div class="a" style="left:1090px;top:264px;width:103px;height:19px;border:1px solid #8493a6;border-top:none;border-radius:0 0 5px 5px;background:linear-gradient(180deg,#dfebfb,#d3e3f8);box-shadow:inset 0 0 0 1px rgba(255,255,255,.55)"></div>
<div class="a" style="left:1118px;top:265px;width:1px;height:17px;background:#9aa9bc"></div>
<div class="a" style="left:1145px;top:265px;width:1px;height:17px;background:#9aa9bc"></div>
<svg style="left:1099px;top:273px" width="12" height="5" viewBox="0 0 12 5"><rect x=".500" y=".500" width="11" height="4" rx="1" fill="#fff" stroke="#4a5260"/></svg>
<svg style="left:1126px;top:268px" width="12" height="10" viewBox="0 0 12 10"><rect x=".500" y=".500" width="11" height="9" rx="1.500" fill="#fff" stroke="#4a5260"/><rect x="3.500" y="3.500" width="5" height="3" fill="#d4e2f4" stroke="#4a5260"/></svg>
<svg style="left:1164px;top:268px" width="11" height="10" viewBox="0 0 11 10"><path d="M.500.500H3.500L5.500 3 7.500.500H10.500V1.500L7.500 5 10.500 8.500V9.500H7.500L5.500 7 3.500 9.500H.500V8.500L3.500 5 .500 1.500z" fill="#fff" stroke="#4a5260" stroke-linejoin="round"/></svg>
<svg style="left:307px;top:273px" width="14" height="11" viewBox="0 0 14 11"><path d="M.800.800h12.400L8.500 6.200V10.200h-3V6.200z" fill="#b39a14" stroke="#000" stroke-width="1.200" stroke-linejoin="miter"/><path d="M3.500 1.800h5.500L7 5.500z" fill="#e8e8e8"/><path d="M6.500 5.500h1v3h-1z" fill="#fff"/></svg>
<div class="t" style="left:327px;top:272px;letter-spacing:-.15px">Фильтр данных...</div>
<div class="a" style="left:305px;top:292px;width:888px;height:546px;border:1px solid #69788a;background:#f0f0f0;box-shadow:0 0 0 1px rgba(255,255,255,.75)"></div>
<div class="t g" style="left:312px;top:296px;letter-spacing:-0.15px">Файл</div>
<div class="t g" style="left:355px;top:296px;letter-spacing:-0.15px">Правка</div>
<div class="t g" style="left:409px;top:296px;letter-spacing:-0.15px">Сервис</div>
<div class="t g" style="left:463px;top:296px;letter-spacing:0.27px">Помощь</div>
<div class="a" style="left:306px;top:313px;width:886px;height:1px;background:#a0a0a0"></div>
<div class="a" style="left:306px;top:314px;width:886px;height:1px;background:#fff"></div>
<div class="grip" style="left:309px;top:317px;height:34px"></div>
<div class="vsep" style="left:498px;top:317px;height:34px"></div>
<div class="vsep" style="left:567px;top:317px;height:34px"></div>
<div class="vsep" style="left:694px;top:317px;height:34px"></div>
<div class="bl" style="left:305px;top:336px;letter-spacing:-0.2px">Очистить</div>
<div class="bl" style="left:365px;top:336px;letter-spacing:-0.35px">Сброс</div>
<div class="bl" style="left:425px;top:336px;letter-spacing:-0.3px">Уст.все</div>
<div class="bl" style="left:492px;top:336px;letter-spacing:-0.3px">Свойства</div>
<div class="bl" style="left:561px;top:336px;letter-spacing:-0.35px">Из файла</div>
<div class="bl" style="left:621px;top:336px;letter-spacing:-0.45px">В файл</div>
<div class="bl" style="left:689px;top:336px;letter-spacing:-0.2px">Ввод</div>
<div class="bl" style="left:749px;top:336px;letter-spacing:-0.1px">Отмена</div>
<svg style="left:338px;top:319px" width="14" height="13" viewBox="0 0 14 13"><rect x=".500" y=".500" width="13" height="12" fill="#fffff0" stroke="#808080"/><rect x="1" y="1" width="12" height="2" fill="#000080"/><rect x="2.500" y="4.500" width="2" height="2" fill="#fffff0" stroke="#707070"/><rect x="2.500" y="8.500" width="2" height="2" fill="#fffff0" stroke="#707070"/><path d="M6 5.500h5" stroke="#505050"/><path d="M6 9.500h5" stroke="#505050"/></svg>
<svg style="left:398px;top:319px" width="14" height="13" viewBox="0 0 14 13"><rect x=".500" y=".500" width="13" height="12" fill="#fffff0" stroke="#808080"/><rect x="1" y="1" width="12" height="2" fill="#000080"/><path d="M2 5.3 3.500 6.8 7.300 2.8" stroke="#e80000" stroke-width="1.400" fill="none"/><rect x="2.500" y="8.500" width="2" height="2" fill="#fffff0" stroke="#707070"/><path d="M7 5.500h4" stroke="#505050"/><path d="M6 9.500h5" stroke="#505050"/></svg>
<svg style="left:458px;top:319px" width="14" height="13" viewBox="0 0 14 13"><rect x=".500" y=".500" width="13" height="12" fill="#fffff0" stroke="#808080"/><rect x="1" y="1" width="12" height="2" fill="#000080"/><path d="M2 5.3 3.500 6.8 7.300 2.8" stroke="#e80000" stroke-width="1.400" fill="none"/><path d="M2 9.3 3.500 10.8 7.300 6.8" stroke="#e80000" stroke-width="1.400" fill="none"/><path d="M7 5.500h4" stroke="#505050"/><path d="M7 9.500h4" stroke="#505050"/></svg>
<svg style="left:526px;top:317.5px" width="16" height="15" viewBox="0 0 16 15"><rect x=".500" y="2.500" width="14" height="12" fill="#fffff0" stroke="#808080"/><rect x="1" y="3" width="4" height="2" fill="#000080"/><rect x="2.500" y="9.500" width="2" height="2" fill="#fffff0" stroke="#707070"/><path d="M6 10.500h6" stroke="#505050"/><path d="M1.800 6.200 7 1.200 9.500 2.200 14 .600 14.300 4 10 6.200 6.500 7.500 3.500 7.500z" fill="#f3c637" stroke="#a87a10" stroke-width=".7"/><path d="M3.500 6 7 2.500M5 6.800 8.500 3.200M6.800 7 10 4M8.500 6.500 11.500 3.800" stroke="#c08a18" stroke-width=".8"/><path d="M14.200 .200h1.500v5h-1.500z" fill="#50a030"/></svg>
<svg style="left:593px;top:318px" width="16" height="15" viewBox="0 0 16 15"><path d="M5 6 9.500.800 14.500 5.500 12 9z" fill="#fff" stroke="#555" stroke-width=".9"/><circle cx="9.600" cy="4.500" r="1.100" fill="#2a55c8"/><path d="M1.500 13.500V5Q1.500 3.500 3 3.500H5.500L7 5" fill="#f6d26a" stroke="#7a6410"/><path d="M1 7.500h12.500l-.8 6.500H2z" fill="#fbdf8e" stroke="#7a6410"/><path d="M2 14.500h11" stroke="#5a4a08" stroke-width="1.200"/></svg>
<svg style="left:654px;top:319px" width="14" height="14" viewBox="0 0 14 14"><path d="M.500.500h13v13H2L.500 12z" fill="#5250dc" stroke="#3a30b0"/><path d="M1 1h1.500v11.500H1z" fill="#7a78ee"/><rect x="3" y="1" width="8.500" height="6.500" fill="#fff"/><path d="M3 5h8.500v2.500H3z" fill="#d8dcf4"/><rect x="4" y="9.500" width="7" height="4" fill="#2a2870"/><rect x="5" y="10.500" width="2" height="3" fill="#e8e8f8"/></svg>
<svg style="left:722px;top:321px" width="13" height="10" viewBox="0 0 13 10"><path d="M.800 5.800 4 8.800 12 .800" stroke="#3a6ed8" stroke-width="2.200" fill="none"/></svg>
<svg style="left:783px;top:320px" width="12" height="11" viewBox="0 0 12 11"><path d="M1 1 10.500 10.500M10.800.700 1 10.700" stroke="#e82a10" stroke-width="2" fill="none"/><path d="M6.800 6.800 10.500 10.500" stroke="#b01808" stroke-width="2"/></svg>
<div class="a" style="left:306px;top:352px;width:886px;height:1px;background:#f8f8f8"></div>
<div class="a" style="left:306px;top:353px;width:886px;height:464px;background:#fff;border-top:1px solid #a0a0a0;border-left:1px solid #a0a0a0;border-right:1px solid #fff;border-bottom:1px solid #fff"></div>
<div class="a" style="left:307px;top:354px;width:884px;height:462px;border-top:1px solid #696969;border-left:1px solid #696969;border-right:1px solid #e3e3e3;border-bottom:1px solid #e3e3e3"></div>
<div class="lh" style="left:308px;width:49px;letter-spacing:-.4px">Статус</div>
<div class="lh" style="left:357px;width:362px;padding-left:6px">Столбец таблицы</div>
<div class="lh" style="left:719px;width:471px;padding-left:6px;border-right:none">Значение</div>
<div class="a" style="left:308px;top:375px;width:882px;height:1px;background:#f0f0f0"></div>
<div class="a" style="left:308px;top:392px;width:882px;height:1px;background:#f0f0f0"></div>
<div class="a" style="left:308px;top:409px;width:882px;height:1px;background:#f0f0f0"></div>
<div class="a" style="left:308px;top:426px;width:882px;height:1px;background:#f0f0f0"></div>
<div class="a" style="left:308px;top:443px;width:882px;height:1px;background:#f0f0f0"></div>
<div class="a" style="left:308px;top:460px;width:882px;height:1px;background:#f0f0f0"></div>
<div class="a" style="left:308px;top:477px;width:882px;height:1px;background:#f0f0f0"></div>
<div class="a" style="left:308px;top:494px;width:882px;height:1px;background:#f0f0f0"></div>
<div class="a" style="left:308px;top:511px;width:882px;height:1px;background:#f0f0f0"></div>
<div class="a" style="left:308px;top:528px;width:882px;height:1px;background:#f0f0f0"></div>
<div class="a" style="left:308px;top:545px;width:882px;height:1px;background:#f0f0f0"></div>
<div class="a" style="left:308px;top:562px;width:882px;height:1px;background:#f0f0f0"></div>
<div class="a" style="left:308px;top:579px;width:882px;height:1px;background:#f0f0f0"></div>
<div class="a" style="left:308px;top:596px;width:882px;height:1px;background:#f0f0f0"></div>
<div class="a" style="left:308px;top:613px;width:882px;height:1px;background:#f0f0f0"></div>
<div class="a" style="left:308px;top:630px;width:882px;height:1px;background:#f0f0f0"></div>
<div class="a" style="left:308px;top:647px;width:882px;height:1px;background:#f0f0f0"></div>
<div class="a" style="left:308px;top:664px;width:882px;height:1px;background:#f0f0f0"></div>
<div class="a" style="left:308px;top:681px;width:882px;height:1px;background:#f0f0f0"></div>
<div class="a" style="left:308px;top:698px;width:882px;height:1px;background:#f0f0f0"></div>
<div class="a" style="left:308px;top:715px;width:882px;height:1px;background:#f0f0f0"></div>
<div class="a" style="left:308px;top:732px;width:882px;height:1px;background:#f0f0f0"></div>
<div class="a" style="left:308px;top:749px;width:882px;height:1px;background:#f0f0f0"></div>
<div class="a" style="left:308px;top:766px;width:882px;height:1px;background:#f0f0f0"></div>
<div class="a" style="left:308px;top:783px;width:882px;height:1px;background:#f0f0f0"></div>
<div class="a" style="left:358px;top:373px;width:1px;height:427px;background:#f0f0f0"></div>
<div class="a" style="left:720px;top:373px;width:1px;height:427px;background:#f0f0f0"></div>
<div class="cb" style="left:312px;top:378px"></div>
<div class="t" style="left:364px;top:378px">Номер лицевого счета</div>
<div class="cb" style="left:312px;top:395px"></div>
<div class="t" style="left:329px;top:395px;letter-spacing:-.6px">БЛК</div>
<div class="t" style="left:364px;top:395px">Подразделение</div>
<div class="cb" style="left:312px;top:412px"></div>
<div class="t" style="left:364px;top:412px">Статус</div>
<div class="cb" style="left:312px;top:429px"></div>
<div class="t" style="left:364px;top:429px">Фамилия Имя Отчество</div>
<div class="cb" style="left:312px;top:446px"></div>
<div class="t" style="left:364px;top:446px;letter-spacing:.2px">Вид платежа "по умолчанию"</div>
<div class="cb ck" style="left:312px;top:463px"></div>
<svg style="left:315px;top:466px" width="7" height="7" viewBox="0 0 7 7"><path d="M0 2v3l2 2 5-5V0L2 4z" fill="#000"/></svg>
<div class="t" style="left:364px;top:463px">Метка</div>
<div class="t" style="left:726px;top:463px">Злостный неплательщик</div>
<div class="cb" style="left:312px;top:480px"></div>
<div class="t" style="left:364px;top:480px">Общее количество номеров</div>
<div class="cb" style="left:312px;top:497px"></div>
<div class="t" style="left:364px;top:497px">Дата последнего счета</div>
<div class="cb" style="left:312px;top:514px"></div>
<div class="t" style="left:364px;top:514px">Сумма последнего счета</div>
<div class="cb" style="left:312px;top:531px"></div>
<div class="t" style="left:364px;top:531px">Дата последнего платежа</div>
<div class="cb" style="left:312px;top:548px"></div>
<div class="t" style="left:364px;top:548px">Сумма последнего платежа</div>
<div class="cb" style="left:312px;top:565px"></div>
<div class="t" style="left:364px;top:565px">Текущий баланс лицевого счета</div>
<div class="cb" style="left:312px;top:582px"></div>
<div class="t" style="left:364px;top:582px">Адрес электронной почты</div>
<div class="cb" style="left:312px;top:599px"></div>
<div class="t" style="left:364px;top:599px">Дополнительные сведения</div>
<div class="cb" style="left:312px;top:616px"></div>
<div class="t" style="left:364px;top:616px">Дата создания записи</div>
<div class="cb" style="left:312px;top:633px"></div>
<div class="t" style="left:364px;top:633px;letter-spacing:.09px">Пользователь, создавший запись</div>
<div class="cb" style="left:312px;top:650px"></div>
<div class="t" style="left:364px;top:650px">Дата изменения записи</div>
<div class="cb" style="left:312px;top:667px"></div>
<div class="t" style="left:364px;top:667px;letter-spacing:.09px">Пользователь, изменивший запись</div>
<div class="a" style="left:308px;top:800px;width:882px;height:16px;background:#f0f0f0"></div>
<svg style="left:314px;top:804px" width="5" height="7" viewBox="0 0 5 7"><path d="M4.500 0v7L0 3.500z" fill="#404040"/></svg>
<div class="a" style="left:326px;top:800px;width:713px;height:15px;border:1px solid #979797;border-radius:2px;background:linear-gradient(180deg,#f3f3f3 0,#e8e8e9 45%,#d0d0d2 50%,#c4c4c8 100%);box-shadow:inset 0 0 0 1px rgba(255,255,255,.6)"></div>
<div class="a" style="left:679px;top:804px;width:2px;height:8px;background:linear-gradient(90deg,#6e6e6e 0,#6e6e6e 50%,#f4f4f4 50%)"></div>
<div class="a" style="left:682px;top:804px;width:2px;height:8px;background:linear-gradient(90deg,#6e6e6e 0,#6e6e6e 50%,#f4f4f4 50%)"></div>
<div class="a" style="left:685px;top:804px;width:2px;height:8px;background:linear-gradient(90deg,#6e6e6e 0,#6e6e6e 50%,#f4f4f4 50%)"></div>
<div class="a" style="left:306px;top:820px;width:886px;height:1px;background:#a0a0a0"></div>
<div class="t" style="left:308px;top:822px;letter-spacing:-.2px">Всего элементов: 18</div>
<!-- ===== popup panel ===== -->
<div class="a" style="left:721px;top:477px;width:493px;height:408px;border:1px solid #a0a0a0;background:#f0f0f0;box-shadow:inset 1px 1px 0 #fff"></div>
<div class="a" style="left:722px;top:834px;width:491px;height:50px;background:#fff"></div>
<div class="a" style="left:722px;top:833px;width:491px;height:1px;background:#a0a0a0"></div>
<div class="t" style="left:733px;top:494px">Столбец таблицы:</div>
<div class="a" style="left:734px;top:510px;width:313px;height:17px;border:1px solid #fff"></div>
<div class="a" style="left:733px;top:509px;width:313px;height:17px;border:1px solid #696969;text-align:center;line-height:17px;white-space:pre">Метка</div>
<div class="cc" style="left:733px;top:539px"></div><svg style="left:736px;top:542px" width="7" height="7" viewBox="0 0 7 7"><path d="M0 2v3l2 2 5-5V0L2 4z" fill="#000"/></svg>
<div class="t" style="left:751px;top:538px">Фильтр активен</div>
<div class="cc" style="left:733px;top:561px"></div>
<div class="t" style="left:751px;top:560px">Инвертировать</div>
<div class="t" style="left:893px;top:538px">Режим слияния:</div>
<div class="a" style="left:893px;top:553px;width:153px;height:23px;background:#fff;border-top:1px solid #a0a0a0;border-left:1px solid #a0a0a0;border-right:1px solid #fff;border-bottom:1px solid #fff"></div>
<div class="a" style="left:894px;top:554px;width:151px;height:21px;border-top:1px solid #696969;border-left:1px solid #696969;border-right:1px solid #e3e3e3;border-bottom:1px solid #e3e3e3"></div>
<div class="t g" style="left:897px;top:558px">И (сложение)</div>
<div class="a" style="left:1027px;top:555px;width:17px;height:19px;background:#f0f0f0;border-top:1px solid #e3e3e3;border-left:1px solid #e3e3e3;border-right:1px solid #696969;border-bottom:1px solid #696969;box-shadow:inset 1px 1px 0 #fff,inset -1px -1px 0 #a0a0a0"></div>
<svg style="left:1032px;top:563px" width="7" height="4" viewBox="0 0 7 4"><path d="M0 0 7 0 3.500 4z" fill="#a0a0a0"/></svg>
<div class="btn" style="left:1061px;top:493px;width:141px;height:25px;line-height:24px;overflow:hidden">Выбрать все записи</div>
<div class="btn" style="left:1061px;top:521px;width:141px;height:25px;line-height:24px;overflow:hidden">Снять все отметки</div>
<div class="btn" style="left:1061px;top:549px;width:141px;height:25px;line-height:24px;overflow:hidden">Инвертировать</div>
<div class="t" style="left:733px;top:586px">Выберите необходимые записи:</div>
<div class="a" style="left:733px;top:601px;width:468px;height:212px;background:#fff;border-top:1px solid #a0a0a0;border-left:1px solid #a0a0a0;border-right:1px solid #fff;border-bottom:1px solid #fff"></div>
<div class="a" style="left:734px;top:602px;width:466px;height:210px;border-top:1px solid #696969;border-left:1px solid #696969;border-right:1px solid #e3e3e3"></div>
<div class="ch" style="left:735px;width:80px">id</div>
<div class="ch" style="left:815px;width:384px">Наименование</div>
<div class="a" style="left:735px;top:623px;width:464px;height:1px;background:#f0f0f0"></div>
<div class="a" style="left:735px;top:640px;width:464px;height:1px;background:#f0f0f0"></div>
<div class="a" style="left:735px;top:657px;width:464px;height:1px;background:#f0f0f0"></div>
<div class="a" style="left:735px;top:674px;width:464px;height:1px;background:#f0f0f0"></div>
<div class="a" style="left:735px;top:691px;width:464px;height:1px;background:#f0f0f0"></div>
<div class="a" style="left:735px;top:708px;width:464px;height:1px;background:#f0f0f0"></div>
<div class="a" style="left:735px;top:725px;width:464px;height:1px;background:#f0f0f0"></div>
<div class="a" style="left:735px;top:742px;width:464px;height:1px;background:#f0f0f0"></div>
<div class="a" style="left:735px;top:759px;width:464px;height:1px;background:#f0f0f0"></div>
<div class="a" style="left:735px;top:776px;width:464px;height:1px;background:#f0f0f0"></div>
<div class="a" style="left:735px;top:793px;width:464px;height:1px;background:#f0f0f0"></div>
<div class="a" style="left:815px;top:622px;width:1px;height:173px;background:#f0f0f0"></div>
<div class="cf" style="left:739px;top:626px"></div><svg style="left:742px;top:629px" width="7" height="7" viewBox="0 0 7 7"><path d="M0 2v3l2 2 5-5V0L2 4z" fill="#000"/></svg>
<div class="t" style="left:755px;top:626px">1</div>
<div class="t" style="left:821px;top:626px">Злостный неплательщик</div>
<div class="a dith" style="left:735px;top:795px;width:464px;height:17px"></div>
<div class="sbb" style="left:735px;top:795px;width:17px;height:17px"></div>
<svg style="left:740px;top:800px" width="4" height="7" viewBox="0 0 4 7"><path d="M4 0v7L0 3.500z" fill="#000"/></svg>
<div class="sbb" style="left:752px;top:795px;width:101px;height:17px"></div>
<div class="sbb" style="left:1183px;top:795px;width:17px;height:17px"></div>
<svg style="left:1190px;top:800px" width="4" height="7" viewBox="0 0 4 7"><path d="M0 0v7L4 3.500z" fill="#000"/></svg>
<div class="a" style="left:1003px;top:847px;width:98px;height:25px;border:1px solid #404040"></div>
<div class="btn" style="left:1004px;top:848px;width:96px;height:23px"></div>
<div class="btn" style="left:1103px;top:847px;width:97px;height:25px"></div>
<svg style="left:1035px;top:855px" width="12" height="9" viewBox="0 0 12 9"><path d="M.800 4.800 4 7.800 11.300 .800" stroke="#3a6fd8" stroke-width="2" fill="none"/></svg>
<div class="t" style="left:1054px;top:853px">ОК</div>
<svg style="left:1122px;top:855px" width="12" height="11" viewBox="0 0 12 11"><path d="M1 .800 11 10.200M11 .800 1 10.200" stroke="#e03010" stroke-width="2" fill="none"/></svg>
<div class="t" style="left:1140px;top:853px">Отмена</div>
</body>
</html>
